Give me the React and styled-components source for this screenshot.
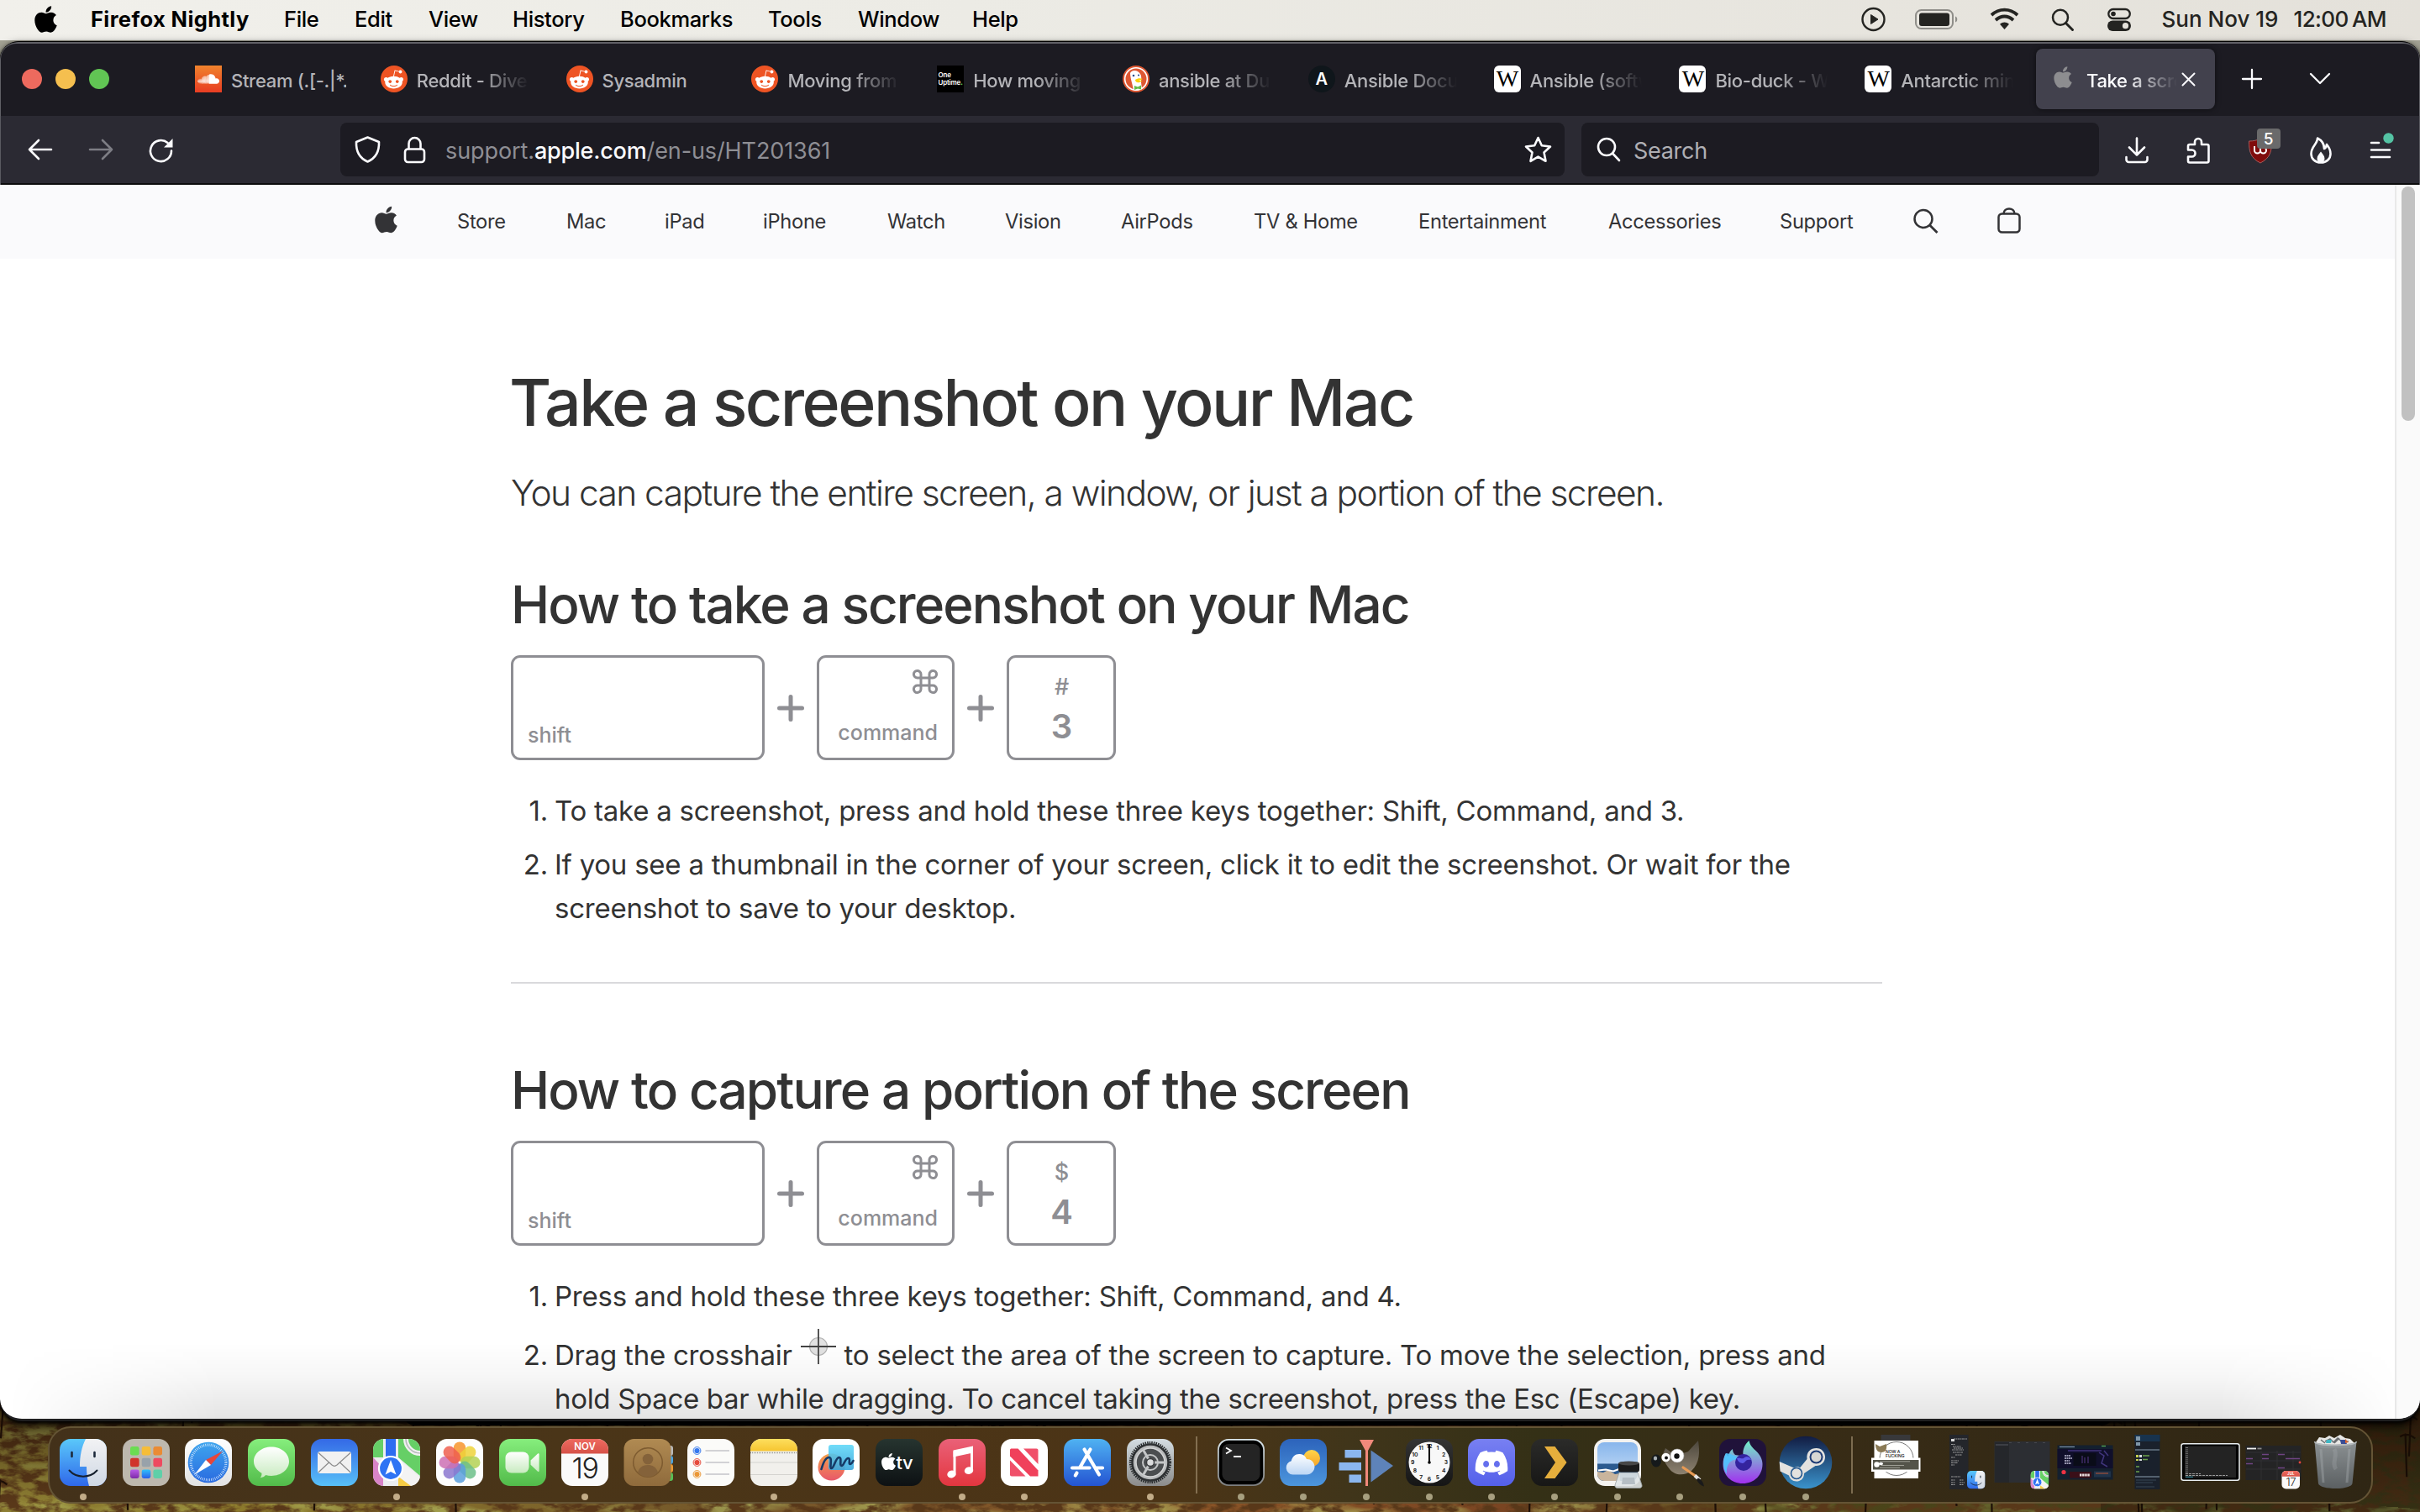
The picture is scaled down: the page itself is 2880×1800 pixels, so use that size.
import React from "react";
import styled, { createGlobalStyle, css } from "styled-components";
import { FaApple, FaRedditAlien, FaSoundcloud, FaDiscord } from "react-icons/fa";

const sans = `Inter, "Liberation Sans", sans-serif`;

const GlobalStyle = createGlobalStyle`
  * { box-sizing: border-box; }
  html, body { margin: 0; padding: 0; }
  body { width: 2880px; height: 1800px; overflow: hidden; background: #2a2412; font-family: ${sans}; }
  svg { display: block; flex: none; overflow: visible; }
`;

/* ---------- desktop ---------- */

const Desktop = styled.div`
  position: relative;
  width: 2880px;
  height: 1800px;
  display: flex;
  flex-direction: column;
  overflow: hidden;
`;

const WallpaperSvg = styled.svg`
  position: absolute;
  inset: 0;
  z-index: 0;
`;

/* ---------- menu bar ---------- */

const MenuBar = styled.header`
  position: relative;
  z-index: 1;
  height: 48px;
  flex: none;
  display: flex;
  align-items: center;
  justify-content: space-between;
  padding: 0 40px 2px 41px;
  background: linear-gradient(90deg, #f1f0eb, #ecebe5 40%, #e4e1da);
  color: #1c1c1a;
`;

const MenuGroup = styled.nav`
  display: flex;
  align-items: center;
`;

const MenuItem = styled.span`
  width: ${(p) => p.$width}px;
  font-size: 25.5px;
  line-height: 46px;
  letter-spacing: ${(p) => (p.$strong ? "0.4px" : "-0.35px")};
  font-weight: ${(p) => (p.$strong ? 700 : 500)};
  color: #000;
  white-space: nowrap;
`;

const StatusGroup = styled.div`
  display: flex;
  align-items: center;
`;

const Clock = styled.div`
  display: flex;
  gap: 18px;
  margin-left: 37px;
  font-size: 26px;
  line-height: 46px;
  font-weight: 500;
  color: #242421;
  white-space: nowrap;

  span:last-child { letter-spacing: -0.6px; word-spacing: -2px; }
`;

/* ---------- browser window ---------- */

const BrowserWindow = styled.main`
  position: relative;
  z-index: 1;
  height: 1643px;
  flex: none;
  margin-top: 1px;
  display: flex;
  flex-direction: column;
  border-top: 1px solid #000;
  border-bottom: 3px solid #1f1f20;
  border-radius: 22px 22px 26px 26px;
  background: #1c1b22;
  box-shadow: 0 2px 4px #000, 0 5px 12px rgba(0, 0, 0, 0.75);
  overflow: hidden;
`;

const TabStrip = styled.div`
  height: 88px;
  flex: none;
  display: flex;
  align-items: center;
  padding: 0 0 2px 25px;
  background: #1c1b22;
  border: solid #606066;
  border-width: 2px 1px 0;
  border-radius: 20px 20px 0 0;
`;

const TrafficLights = styled.div`
  display: flex;
  gap: 16px;
  width: 185px;
`;

const Light = styled.i`
  width: 24px;
  height: 24px;
  border-radius: 50%;
  background: ${(p) => p.$color};
`;

const Tab = styled.div`
  width: 212.8px;
  height: 72px;
  margin: 0 4px;
  display: flex;
  align-items: center;
  gap: 11px;
  padding: 0 17px;
  border-radius: 8px;
  color: #b4b4b8;
  ${(p) => p.$active && css`
    padding-right: 23px;
    background: #42414d;
    color: #fbfbfe;
    box-shadow: 0 0 6px rgba(0, 0, 0, 0.55);
  `}
`;

const TabTitle = styled.span`
  flex: 1;
  min-width: 0;
  padding-top: 4px;
  margin-right: ${(p) => (p.$active ? "-8px" : "-1px")};
  font-size: 22px;
  line-height: 32px;
  font-weight: 500;
  letter-spacing: -0.3px;
  white-space: nowrap;
  overflow: hidden;
  mask-image: ${(p) => (p.$fade ? "linear-gradient(90deg, #000 calc(100% - 62px), transparent 98%)" : "none")};
`;

const Favicon = styled.span`
  width: 32px;
  height: 32px;
  flex: none;
  display: flex;
  align-items: center;
  justify-content: center;
  overflow: hidden;
  color: #fff;
  border-radius: ${(p) => p.$radius || 0};
  background: ${(p) => p.$bg || "transparent"};
  font: ${(p) => p.$font || "inherit"};
`;

const TinyMark = styled.span`
  font: 600 8px/9px ${sans};
  color: #fff;
  letter-spacing: -0.2px;
  b { color: #58d35d; }
`;

const WikiLetter = styled.span`
  color: #000;
  letter-spacing: -1px;
`;

const TabButton = styled.span`
  width: 81px;
  display: flex;
  justify-content: center;
`;

const Toolbar = styled.div`
  height: 82px;
  flex: none;
  display: flex;
  align-items: center;
  padding: 0 32px 0 32px;
  background: #2b2a33;
  border: solid #5a5a61;
  border-width: 0 1px;
  box-shadow: inset 0 -2px 0 #0c0c0d;
`;

const NavButtons = styled.div`
  display: flex;
  gap: 42px;
  width: 372px;
`;

const Field = styled.div`
  width: ${(p) => p.$width}px;
  height: 64px;
  margin-top: -2px;
  margin-right: ${(p) => p.$after}px;
  padding: 0 15px 0 17px;
  display: flex;
  align-items: center;
  background: #1c1b22;
  border-radius: 8px;
  font-size: 27px;
  letter-spacing: -0.1px;
  color: #8e8e94;
`;

const UrlText = styled.span`
  flex: 1;
  margin-left: 24px;
  padding-top: 2px;
  b { color: #fbfbfe; font-weight: 500; letter-spacing: -0.2px; }
`;

const SearchText = styled.span`
  margin-left: 15px;
  padding-top: 2px;
  color: #afafb4;
  letter-spacing: -0.3px;
`;

const ToolButtons = styled.div`
  flex: 1;
  display: flex;
  justify-content: space-between;
  align-items: center;
  color: #fbfbfe;
`;

const BadgeHost = styled.span`
  position: relative;
`;

const Badge = styled.span`
  position: absolute;
  left: 10px;
  top: -11px;
  width: 28px;
  height: 24px;
  border-radius: 4px;
  background: #6a6a6b;
  color: #fff;
  font-size: 19px;
  font-weight: 500;
  line-height: 25px;
  text-align: center;
`;

/* ---------- web page ---------- */

const Viewport = styled.section`
  position: relative;
  flex: 1;
  min-height: 0;
  display: flex;
  background: #fff;
  overflow: hidden;
  border-radius: 0 0 23px 23px;

  &::after {
    content: "";
    position: absolute;
    left: 0;
    right: 0;
    bottom: 0;
    height: 90px;
    background: linear-gradient(180deg, transparent, rgba(0, 0, 0, 0.035) 45%, rgba(0, 0, 0, 0.105));
    mask-image: linear-gradient(90deg, transparent 10px, #000 260px, #000 2640px, transparent 2860px);
    pointer-events: none;
  }
`;

const Page = styled.div`
  flex: 1;
  min-width: 0;
`;

const ScrollTrack = styled.div`
  width: 30px;
  flex: none;
  padding: 2px 0 0 6px;
  background: #fafafa;
  border-left: 2px solid #e9e9e9;
`;

const ScrollThumb = styled.div`
  width: 16px;
  height: 279px;
  border-radius: 8px;
  background: #c1c1c1;
`;

const SiteNav = styled.nav`
  height: 88px;
  display: flex;
  align-items: center;
  padding: 0 0 1px 446px;
  background: #fafafc;
  color: #333336;
`;

const SiteLink = styled.span`
  width: ${(p) => p.$width}px;
  flex: none;
  font-size: 23.7px;
  letter-spacing: -0.3px;
  white-space: nowrap;
`;

const Article = styled.article`
  width: 1632px;
  margin-left: 608px;
  padding-top: 127px;
  color: #333;
`;

const Title = styled.h1`
  margin: 0 0 0 -2px;
  font-size: 77px;
  line-height: 88px;
  font-weight: 500;
  letter-spacing: -2.54px;
  white-space: nowrap;
`;

const Intro = styled.p`
  margin: 34px 0 67px;
  font-size: 42.5px;
  line-height: 60px;
  font-weight: 300;
  letter-spacing: -1.58px;
  white-space: nowrap;
`;

const Heading = styled.h2`
  margin: 0 0 24px;
  font-size: 62px;
  line-height: 72px;
  font-weight: 500;
  letter-spacing: -1.87px;
  white-space: nowrap;
`;

const KeyRow = styled.div`
  height: 125px;
  display: flex;
  align-items: stretch;
  color: #8e8e93;
`;

const Key = styled.div`
  width: ${(p) => p.$width}px;
  display: flex;
  flex-direction: column;
  align-items: ${(p) => p.$align};
  justify-content: ${(p) => p.$justify || "space-between"};
  padding: ${(p) => p.$pad};
  border: 3px solid #8e8e93;
  border-radius: 11px;
`;

const KeyLabel = styled.span`
  font-size: ${(p) => p.$size || 25}px;
  line-height: ${(p) => p.$line || 30}px;
  font-weight: ${(p) => p.$weight || 500};
`;

const Plus = styled.svg`
  align-self: center;
  margin: 0 15px;
`;

const Steps = styled.ol`
  list-style: none;
  margin: 34px 0 0;
  padding: 0;
  display: flex;
  flex-direction: column;
  gap: ${(p) => p.$gap}px;
`;

const Step = styled.li`
  display: flex;
  font-size: 33px;
  line-height: 52px;
  letter-spacing: -0.24px;
  white-space: nowrap;
`;

const StepNumber = styled.span`
  width: 52px;
  padding-right: 8px;
  text-align: right;
  flex: none;
`;

const StepText = styled.span`
  display: block;
`;

const Tight = styled.span`
  letter-spacing: -0.32px;
`;

const Crosshair = styled.svg`
  && { display: inline-block; }
  vertical-align: 1px;
  margin: -10px 10px 0 10px;
`;

const Rule = styled.hr`
  height: 2px;
  margin: 62px 0 91px;
  border: 0;
  background: #d9d9dc;
`;

/* ---------- dock ---------- */

const Dock = styled.footer`
  position: relative;
  z-index: 2;
  width: 2767px;
  height: 92px;
  flex: none;
  margin: 6px 0 0 57px;
  padding-left: 2.6px;
  display: flex;
  align-items: flex-start;
  border: 2px solid #645435;
  border-radius: 27px;
  background: linear-gradient(90deg, #43311a, #4a3518 22%, #4c3416 48%, #40351a 56%, #343016 64%, #382c16 75%, #2f2614);
`;

const DockSlot = styled.div`
  width: 74.7px;
  flex: none;
  padding-top: 13px;
  display: flex;
  flex-direction: column;
  align-items: center;
`;

const MiniSlot = styled.div`
  width: 74.7px;
  flex: none;
  padding-top: 5px;
`;

const RunningDot = styled.i`
  width: 8px;
  height: 8px;
  margin-top: 9px;
  border-radius: 50%;
  background: ${(p) => (p.$cool ? "#a79f7f" : "#c2ac88")};
`;

const Divider = styled.i`
  width: 2px;
  height: 68px;
  flex: none;
  margin: 10px 14.3px 0 17px;
  background: rgba(170, 152, 120, 0.6);
`;

/* ---------- drawings ---------- */

const gradients = [
  ["finderBlue", "#5ac8fa", "#2f68ea"], ["finderLight", "#f2f2f4", "#cfd8e4"], ["white", "#ffffff", "#e2e2e2"],
  ["safari", "#3fa5ee", "#2a6be0"], ["green", "#86ee7d", "#52bb4a"], ["mail", "#3469e6", "#58c0f8"],
  ["bubble", "#ffffff", "#c8ebc0"], ["calRed", "#ee6a60", "#d65248"], ["contacts", "#b08a52", "#8f6b3c"],
  ["notes", "#fddf5e", "#f6c531"], ["tv", "#26342f", "#0d1113"], ["music", "#ea6178", "#e3363f"],
  ["appstore", "#4fb2f2", "#2454d2"], ["gear", "#d4dde2", "#8b8b8b"], ["weather", "#2c63bb", "#4c96dd"],
  ["cloud", "#ffffff", "#bcd6f4"], ["sun", "#ffd54a", "#f6a327"], ["clock", "#343434", "#151515"],
  ["discord", "#7880f2", "#5460ea"], ["plex", "#2b2b29", "#171716"], ["preview", "#88b6ec", "#cbe0f6"],
  ["flame", "#6ff3c5", "#a22ff0"], ["steam", "#121c42", "#3a93cc"], ["trash", "#8f9598", "#5d6265"],
  ["wolf", "#4c463c", "#8d8270"], ["freeSky", "#62d8f8", "#39a6dc"], ["freeWarm", "#f5a04a", "#e8586a"],
  ["terminal", "#dde9ee", "#7d7f80"], ["purple", "#b95be8", "#7d2ba8"], ["bluePad", "#2fc3fb", "#2a5ee8"],
];

const DefsSvg = styled.svg`
  position: absolute;
`;

const Defs = () => (
  <DefsSvg width="0" height="0">
    <defs>
      {gradients.map(([id, a, b]) => (
        <linearGradient key={id} id={id} x1="0" y1="0" x2="0" y2="1">
          <stop offset="0" stopColor={a} />
          <stop offset="1" stopColor={b} />
        </linearGradient>
      ))}
      <clipPath id="tile"><rect width="56" height="56" rx="13" /></clipPath>
    </defs>
  </DefsSvg>
);

const Tile = ({ fill }) => <rect width="56" height="56" rx="13" fill={fill} />;

const FinderArt = () => (
  <g clipPath="url(#tile)">
    <rect width="56" height="56" fill="url(#finderBlue)" />
    <path d="M31 0C26 10 24 20 24 33h8c0 9 1 16 3 23h21V0Z" fill="url(#finderLight)" />
    <path d="M14.5 16v5M41.5 16v5" stroke="#1d2a3c" strokeWidth="2.6" strokeLinecap="round" />
    <path d="M11.5 37.5C20 47 36 47 44.5 37.5" fill="none" stroke="#16202e" strokeWidth="2" strokeLinecap="round" />
  </g>
);

const LaunchpadArt = () => {
  const c = ["#6bdc52", "#f6bd38", "#ea8b34", "#d0342b", "#98a2aa", "#ee4a60", "url(#purple)", "url(#bluePad)", "#5fcfa8"];
  return (
    <g>
      <Tile fill="#bdb8ae" />
      {c.map((f, i) => <rect key={i} x={9 + (i % 3) * 13.7} y={9 + Math.floor(i / 3) * 13.7} width="10.6" height="10.6" rx="2.4" fill={f} />)}
    </g>
  );
};

const SafariArt = () => (
  <g>
    <Tile fill="url(#white)" />
    <circle cx="28" cy="28" r="24.3" fill="url(#safari)" />
    <circle cx="28" cy="28" r="20.8" fill="none" stroke="#e6f3ff" strokeWidth="3.2" strokeDasharray="0.7 1.48" />
    <path d="M45 14.5 31 31l-6-6Z" fill="#e8453a" />
    <path d="M11.5 42.5 25 25l6 6Z" fill="#fff" />
  </g>
);

const MessagesArt = () => (
  <g>
    <Tile fill="url(#green)" />
    <path d="M28 9.5c11.6 0 21 7.6 21 17.2s-9.4 17.2-21 17.2c-2.4 0-4.7-.3-6.8-.9-1.5 1.7-3.8 2.9-6.4 3.3 1.2-1.5 1.9-3.6 1.6-5.6C10.8 37.6 7 32.5 7 26.7 7 17.1 16.4 9.5 28 9.5Z" fill="url(#bubble)" />
  </g>
);

const MailArt = () => (
  <g>
    <Tile fill="url(#mail)" />
    <rect x="8" y="15" width="40" height="26" rx="3" fill="#f1f1f1" />
    <path d="M9 16.5 25 31c2 1.7 4 1.7 6 0l16-14.5M9 39.8 21.5 28M47 39.8 34.5 28" fill="none" stroke="#8c8c8c" strokeWidth="1.2" />
  </g>
);

const MapsArt = () => (
  <g clipPath="url(#tile)">
    <rect width="56" height="56" fill="#eceded" />
    <path d="M0 0h12v22H0ZM30 0h26v44L30 22Z" fill="#66cf66" />
    <path d="M0 22 13 36v20H0Z" fill="#d884c8" />
    <path d="M30 24 56 46v10H30Z" fill="#f3f3f3" />
    <path d="M29 44 45 56H29Z" fill="#f7cd45" />
    <circle cx="56" cy="0" r="17" fill="none" stroke="#f0f0f0" strokeWidth="6" />
    <circle cx="56" cy="0" r="17" fill="none" stroke="#b5b8ba" strokeWidth="1.5" />
    <path d="M12 0h18v56H12Z" fill="#eceef0" />
    <path d="M15 0h12v24H15Z" fill="#2d6cf0" />
    <circle cx="21" cy="35" r="14" fill="#2f74f4" stroke="#fff" strokeWidth="2.2" />
    <path d="M21 25l6.5 17.5L21 39l-6.5 3.5Z" fill="#fff" />
  </g>
);

const PhotosArt = () => {
  const c = ["#f7942b", "#efd23a", "#b4d154", "#6cc08a", "#5b9fdd", "#8b77cf", "#cc70b4", "#ee5f4f"];
  return (
    <g>
      <Tile fill="#fdfdfd" />
      {c.map((f, i) => (
        <rect key={f} x="20.8" y="3.5" width="14.4" height="23.5" rx="7.2" fill={f} fillOpacity="0.85" transform={`rotate(${i * 45} 28 28)`} />
      ))}
      <circle cx="28" cy="28" r="1.5" fill="#fff" />
    </g>
  );
};

const FaceTimeArt = () => (
  <g>
    <Tile fill="url(#green)" />
    <rect x="7.5" y="15.5" width="28" height="25" rx="7" fill="url(#bubble)" />
    <path d="M37.5 25.5 46 17.5c.8-.7 1.6-.3 1.6.6v20c0 .9-.8 1.3-1.6.6l-8.5-8Z" fill="url(#bubble)" />
  </g>
);

const CalendarArt = ({ month, day }) => (
  <g>
    <Tile fill="#fafafa" />
    <path d="M0 17.5V13A13 13 0 0 1 13 0h30a13 13 0 0 1 13 13v4.5Z" fill="url(#calRed)" />
    <text x="28" y="13" fontSize="11.5" fontWeight="600" fill="#fff" textAnchor="middle" fontFamily={sans}>{month}</text>
    <text x="28" y="47" fontSize="34" letterSpacing="-1.5" fontWeight="300" fill="#222" textAnchor="middle" fontFamily={sans}>{day}</text>
  </g>
);

const ContactsArt = () => (
  <g>
    <rect x="44" y="8" width="14" height="12" rx="3" fill="#b9b9b9" />
    <rect x="44" y="20" width="14" height="10" rx="3" fill="#4ba6e4" />
    <rect x="44" y="30" width="14" height="10" rx="3" fill="#ee9a31" />
    <rect x="44" y="40" width="14" height="10" rx="3" fill="#56c156" />
    <rect x="-0.5" width="56" height="56" rx="12" fill="url(#contacts)" />
    <circle cx="28" cy="28" r="17.3" fill="none" stroke="#7d5b30" strokeWidth="1.5" />
    <circle cx="28" cy="24" r="6.3" fill="#84623a" />
    <path d="M16 40c2-7 7-9 12-9s10 2 12 9c-7 7-17 7-24 0Z" fill="#84623a" />
  </g>
);

const RemindersArt = () => (
  <g>
    <Tile fill="#fbfbf9" />
    {["#3578ee", "#e64a3c", "#ea9736"].map((f, i) => (
      <g key={f}>
        <circle cx="11.5" cy={14 + i * 14} r="4.4" fill="none" stroke={f} strokeWidth="1" />
        <circle cx="11.5" cy={14 + i * 14} r="3.1" fill={f} />
        <path d={`M21.5 ${14 + i * 14}h28.5`} stroke="#c4c4c8" strokeWidth="1.5" />
      </g>
    ))}
  </g>
);

const NotesArt = () => (
  <g clipPath="url(#tile)">
    <rect width="56" height="56" fill="#f1f0ec" />
    <rect width="56" height="14.5" fill="url(#notes)" />
    <path d="M0 16.500h56" stroke="#9a9a94" strokeWidth="1.4" strokeDasharray="1 1" />
    <path d="M0 28h56M0 42.5h56" stroke="#d4d3cf" strokeWidth="1.2" />
  </g>
);

const FreeformArt = () => (
  <g>
    <Tile fill="#fff" />
    <circle cx="22.5" cy="33.5" r="16" fill="url(#freeWarm)" />
    <rect x="19" y="7" width="30" height="30" rx="3" fill="url(#freeSky)" fillOpacity="0.9" />
    <path d="M10.500 36c2-7 5-14 9-14 5 0 0 13 3 13 3 0 5-13 9-13 4 0 0 10 3 10 3 0 4-9 8-9 3 0 0 7 2 7 2 0 3-2 4-4" fill="none" stroke="#163a67" strokeWidth="2.6" strokeLinecap="round" />
  </g>
);

const TvArt = () => (
  <g>
    <Tile fill="url(#tv)" />
    <FaApple x={4} y={15.5} size={23} color="#fff" />
    <text x="24.500" y="36" fontSize="22" fontWeight="500" fill="#fff" fontFamily={sans} letterSpacing="-0.5">tv</text>
  </g>
);

const MusicArt = () => (
  <g>
    <Tile fill="url(#music)" />
    <path d="M19 14.5v26M39.5 9.5v27" stroke="#fff" strokeWidth="3" />
    <path d="M17.5 13.5 41 8.5v8L17.5 21.5Z" fill="#fff" />
    <ellipse cx="15.5" cy="42" rx="5.3" ry="4.3" fill="#fff" transform="rotate(-15 15.5 42)" />
    <ellipse cx="36" cy="37.7" rx="5.3" ry="4.3" fill="#fff" transform="rotate(-15 36 37.7)" />
  </g>
);

const NewsArt = () => (
  <g>
    <Tile fill="#fff" />
    <path d="M11 13v7.5L35 44.5h9.5v-7L20.5 11.500H13c-1.2 0-2 .6-2 1.5Z" fill="#f0405b" />
    <path d="M11 25.5v17c0 1.2.8 2 2 2h16.5ZM27 11.500h15.5c1.2 0 2 .8 2 2V30Z" fill="#f0506a" />
  </g>
);

const AppStoreArt = () => (
  <g>
    <Tile fill="url(#appstore)" />
    <path d="M31.5 12.5 19.5 33.500M15.5 40.5l-1.7 3M24.5 12.5l17.5 30M10 34.5h20.5M38.5 34.500H46" stroke="#fff" strokeWidth="4.2" strokeLinecap="round" fill="none" />
  </g>
);

const SettingsArt = () => (
  <g>
    <Tile fill="url(#gear)" />
    <circle cx="28" cy="28" r="23.6" fill="none" stroke="#26292b" strokeWidth="3" strokeDasharray="1.5 1.1" />
    <circle cx="28" cy="28" r="21.5" fill="#b8babb" stroke="#2d3032" strokeWidth="2.5" />
    <circle cx="28" cy="28" r="17" fill="#4b4e50" stroke="#d4d5d6" strokeWidth="1.5" />
    <path d="M28 28h17M28 28l-8.5-15M28 28l-8.500 15" stroke="#c3c5c6" strokeWidth="3" />
    <circle cx="28" cy="28" r="9" fill="none" stroke="#c3c5c6" strokeWidth="2" />
    <circle cx="28" cy="28" r="4.5" fill="#dadbdc" stroke="#3b3d3f" strokeWidth="1.5" />
  </g>
);

const TerminalArt = () => (
  <g>
    <Tile fill="url(#terminal)" />
    <rect x="1.8" y="1.8" width="52.4" height="52.4" rx="11.5" fill="#000" />
    <rect x="5.5" y="6" width="45" height="44" rx="7.5" fill="#242424" />
    <path d="M10 10.5 16 14l-6 3.500M19 21h9" fill="none" stroke="#fff" strokeWidth="1.8" />
  </g>
);

const WeatherArt = () => (
  <g>
    <Tile fill="url(#weather)" />
    <circle cx="38" cy="23" r="10" fill="url(#sun)" />
    <path d="M15.5 42.5a8.3 8.3 0 0 1-1.7-16.3C14.8 21 19 17.5 24 18c4 .3 6.7 2.5 8 6 5 0 9 3.3 9.5 8.5.2 5.5-4 10-9.5 10Z" fill="url(#cloud)" />
  </g>
);

const AlignArt = () => (
  <g>
    <rect x="2.5" y="13" width="19.5" height="9.5" fill="#8bb6ee" />
    <rect x="-4.5" y="28" width="26.5" height="9.5" fill="#8bb6ee" />
    <rect x="7.5" y="42.5" width="14.5" height="9.5" fill="#8bb6ee" />
    <path d="M20 1h17l-7 13v42h-3V14Z" fill="#f1897b" />
    <path d="M33.5 13.5 60 32 33.5 51.500Z" fill="#5e83b9" />
  </g>
);

const ClockArt = () => (
  <g>
    <Tile fill="url(#clock)" />
    <circle cx="28" cy="28" r="24.5" fill="#f8f8f8" />
    {Array.from({ length: 12 }, (_, i) => {
      const a = ((i + 1) * Math.PI) / 6;
      return <text key={i} x={28 + 19.8 * Math.sin(a)} y={30.4 - 19.8 * Math.cos(a)} fontSize="6.8" fontWeight="600" fill="#111" textAnchor="middle" fontFamily={sans}>{i + 1}</text>;
    })}
    <path d="M28 28V7" stroke="#000" strokeWidth="2" strokeLinecap="round" />
    <circle cx="28" cy="28" r="1.8" fill="#000" />
  </g>
);

const DiscordArt = () => (
  <g>
    <Tile fill="url(#discord)" />
    <FaDiscord x={7} y={7.5} size={42} color="#fff" />
  </g>
);

const PlexArt = () => (
  <g>
    <Tile fill="url(#plex)" />
    <path d="M16 9h12.5L42.5 28 28.5 47H16l13-19Z" fill="#e5ae3c" />
  </g>
);

const PreviewArt = () => (
  <g>
    <Tile fill="#f4f3f0" />
    <rect x="4" y="4" width="48" height="46" rx="8" fill="url(#preview)" />
    <path d="M4 29.5h48V42a8 8 0 0 1-8 8H12a8 8 0 0 1-8-8Z" fill="#2b5a8f" />
    <path d="M4 39l7 1 6-3 8 5 6-1v9H12a8 8 0 0 1-8-8Z" fill="#c9b59d" />
    <path d="M5 37.5l9-1 9 2 8-3" stroke="#fff" strokeWidth="2" fill="none" />
    <path d="M30 40h22l5 15c.5 2-1 3.5-3 3.500H28c-2 0-3.5-1.5-3-3.500Z" fill="#dfe4e6" fillOpacity="0.9" stroke="#9aa2a5" strokeWidth="0.8" />
    <path d="M34 46h14l1 8H33Z" fill="#b5bec4" />
    <rect x="29" y="27.5" width="25" height="12" rx="3" fill="#1b1b1b" />
    <ellipse cx="41.5" cy="29" rx="12" ry="2.5" fill="#474747" />
  </g>
);

const GimpArt = () => (
  <g>
    <path d="M8 18 11 11l7 5c6 2 14 2 20-1l12-13c2 14 2 26-8 36-8 6-20 6-26-2-4-5-8-11-8-18Z" fill="url(#wolf)" />
    <ellipse cx="0" cy="26" rx="6" ry="7.5" fill="#15191b" />
    <ellipse cx="-1" cy="23" rx="2.2" ry="2.6" fill="#a8afb2" />
    <circle cx="11.5" cy="22" r="5.2" fill="#fff" />
    <circle cx="25" cy="20" r="8" fill="#fff" stroke="#aaa" strokeWidth="0.6" />
    <circle cx="12" cy="22.5" r="2" fill="#111" />
    <circle cx="24.5" cy="20.5" r="3.2" fill="#111" />
    <path d="M32 34 48 45" stroke="#e79a54" strokeWidth="3.2" strokeLinecap="round" />
    <path d="M46 43.5 52 49" stroke="#e4e4e4" strokeWidth="4" />
    <path d="M50 46.5c4 2 6 5 7 10-4-1-7-4-9-8Z" fill="#1a1a1a" />
  </g>
);

const NightlyArt = () => (
  <g>
    <Tile fill="#20123a" />
    <path d="M28 53C14 53 4.5 43 4.5 30c0-5 1-9 3.5-13 .5 2 1.5 3 3 4 .5-4 2-7 5-9 0 3 1 5 3 7 5 1 8 1 10 2C27 14 30 7 35.5 2c1 6 5 9 9 13 4 4 7 9 7 15 0 13-9.5 23-23.5 23Z" fill="url(#flame)" />
    <path d="M8 17c-4 9-4 18 1 25-1-10 3-15 8-17l6-1c-1-4-7-4-9-6Z" fill="#4fc4ff" fillOpacity="0.9" />
    <circle cx="29" cy="28" r="10" fill="#34239e" />
    <path d="M21 23c3-1 6 1 8 0 3-3 8-2 9 2-4-1-6 0-8 3-2 2-7 1-9-5Z" fill="#5d5be8" />
  </g>
);

const SteamArt = () => (
  <g>
    <circle cx="28" cy="28" r="31.3" fill="url(#steam)" />
    <path d="M-3.300 27 14 34.5c3-1.800 6-1.500 7 0L29.5 24C28.5 15 34 11 40.5 11 47 11 51 16 51 21.5 51 28 46 32.5 39.5 32L26 41c0 7-5 9.5-9 9.5-5 0-8-3-9-7L-2.5 38.500Z" fill="#e3e2df" />
    <circle cx="40.5" cy="21.5" r="8" fill="#1d3b75" />
    <circle cx="40.5" cy="21.5" r="6" fill="#d8d7d3" />
    <circle cx="17" cy="41" r="6.5" fill="none" stroke="#23578f" strokeWidth="1.6" />
  </g>
);

const CollageMini = () => (
  <g>
    <rect x="19.5" y="3" width="35" height="10" fill="#38383a" />
    <rect x="11.5" y="10" width="52.5" height="45" fill="#fff" />
    <circle cx="38" cy="31.5" r="20" fill="none" stroke="#555" strokeWidth="0.8" />
    <path d="M13 14l5 3 8-3c1 6-1 10-6 10s-7-4-7-10Z" fill="#8a7a56" />
    <text x="25" y="25.5" fontSize="5" fontWeight="500" fill="#111" fontFamily={sans}>NOW A</text>
    <text x="25" y="30.3" fontSize="5" fontWeight="500" fill="#111" fontFamily={sans}>FUCKING</text>
    <rect x="8" y="30.5" width="58.5" height="16.5" fill="#fff" />
    <rect x="10" y="33" width="54.5" height="11.5" fill="#54544a" />
    <circle cx="14.5" cy="38.5" r="3.2" fill="#fff" />
    <rect x="17" y="36" width="5" height="3" rx="1.5" fill="#fff" />
    <path d="M18 34.800h36M19 39.500h28M18 42.300h24" stroke="#b5b5ac" strokeWidth="0.8" />
  </g>
);

const LogMini = () => (
  <g>
    <rect x="26" y="3" width="22.5" height="65" fill="#24262b" />
    <path d="M28 8h4v3h-4z" fill="#ddd" />
    <path d="M31 8h16M28 14.500h5M30 17h10M31 19h11M29 21h14M30 24h12M33 27h8M28 30h5M28 34h9M28 36.500h8M28 39h4M28 53h11M28 57h5M38 57h5M28 60h5M38 60h6M28 62.500h5M38 62.500h5" stroke="#a8a8a8" strokeWidth="0.9" strokeDasharray="2 0.5" />
    <svg x="47" y="46" width="21.5" height="21.5" viewBox="0 0 56 56"><FinderArt /></svg>
  </g>
);

const MapMini = () => (
  <g>
    <rect x="4.5" y="11" width="66" height="49" fill="#2c2e33" />
    <path d="M5 12h17v48H5Z" fill="#25272b" />
    <path d="M6 15h15" stroke="#46484d" strokeWidth="1.5" />
    <path d="M22 12.500h47" stroke="#45474c" strokeWidth="1" strokeDasharray="3 7" />
    <svg x="47.5" y="46" width="21.5" height="21.5" viewBox="0 0 56 56"><MapsArt /></svg>
  </g>
);

const StoreMini = () => (
  <g>
    <rect x="4.5" y="15.5" width="66" height="41" fill="#14202f" />
    <rect x="4.5" y="20" width="66" height="23" fill="#100f2b" />
    <path d="M7 17.500h18" stroke="#7c93a8" strokeWidth="1.2" />
    <path d="M57 16.500h5" stroke="#58b05a" strokeWidth="1.2" />
    <path d="M17 22h40M54 24l6 4-3 9 7 4M60 22l5 6" stroke="#40357c" strokeWidth="1.5" fill="none" />
    <rect x="23.5" y="25" width="27" height="15" fill="#0a0c18" />
    <path d="M34 28v9M37 30v7M41 29v8" stroke="#3d2a63" strokeWidth="1.5" />
    <path d="M13 28h7M13 31h9M13 34h6M13 37h8" stroke="#c4c4dc" strokeWidth="1.7" strokeDasharray="2 0.5" />
    <circle cx="12" cy="47.5" r="2.6" fill="#ee3344" />
    <rect x="19" y="47" width="26" height="7.5" fill="#3a0f18" />
    <path d="M31 51h12" stroke="#e9dede" strokeWidth="3" strokeDasharray="2.5 0.6" />
    <rect x="48" y="46.5" width="20" height="7" fill="#203349" />
    <path d="M50 49h15" stroke="#8a4a3c" strokeWidth="1.5" />
  </g>
);

const FriendsMini = () => (
  <g>
    <rect x="22.5" y="3" width="30" height="65" fill="#1a212c" />
    <rect x="22.5" y="3" width="30" height="8" fill="#18334d" />
    <path d="M23 21h29M23 53h29" stroke="#53606e" strokeWidth="2" />
    <path d="M24 5h5v5h-5zM24 12h5v4h-5z" fill="#7e96a8" />
    <path d="M24 27h3v3h-3zM24 32h3v2h-3z" fill="#c7d04f" />
    <path d="M28 27h3v3h-3zM28 32h3v2h-3z" fill="#d9dde1" />
    <path d="M32 28h8M32 32.500h6M24 41h4M24 47h4" stroke="#6da14b" strokeWidth="1.5" />
    <path d="M24 57h24M24 60h20M24 65h22" stroke="#394756" strokeWidth="1" />
  </g>
);

const TerminalMini = () => (
  <g>
    <rect x="3" y="13.8" width="69" height="43.5" rx="2.5" fill="#000" stroke="#e9eef0" strokeWidth="1.5" />
    <rect x="7" y="16.5" width="61" height="37.5" fill="#232323" />
    <path d="M9.500 18v31" stroke="#777" strokeWidth="3" strokeDasharray="0.9 1.5" />
    <path d="M8 49.500h18M8 51.500h50" stroke="#aaa" strokeWidth="0.9" strokeDasharray="3 1" />
    <path d="M8 53.300h9" stroke="#3fa7c0" strokeWidth="0.9" />
  </g>
);

const CalendarMini = () => (
  <g>
    <rect x="4.5" y="16" width="66" height="41" fill="#242425" />
    <path d="M6 19.500h11" stroke="#eee" strokeWidth="1.8" />
    <path d="M18.500 19.500h5" stroke="#888" strokeWidth="1.8" />
    <path d="M5 24h65M5 34h65M5 44h65M23 22v35M42 22v35M61 22v35" stroke="#343437" strokeWidth="0.8" />
    <path d="M24 26.500h8M43 26.500h8M5 31.500h8M24 31.500h8M52 31.500h17M5 37.500h8M43 42.500h8" stroke="#6e4482" strokeWidth="1.5" />
    <circle cx="69" cy="36" r="1.4" fill="#e5453b" />
    <svg x="47.5" y="46" width="21.5" height="21.5" viewBox="0 0 56 56"><CalendarArt month="JUL" day="17" /></svg>
  </g>
);

const TrashMini = () => (
  <g>
    <path d="M14 12l4-6 7 1 5-3 6 3 7-4 6 4 6 1 5 5-6 6H20Z" fill="#e8e8e6" />
    <path d="M25 11l6-3 4 4 5-5 6 5 7-1M20 9l5 4M36 13l6-6" stroke="#6b6f72" strokeWidth="1.5" fill="none" />
    <path d="M27 9h6l-1 4h-6Z" fill="#3fb7c4" />
    <path d="M43 9h6l2 5h-7Z" fill="#3a4d96" />
    <path d="M49 8l4 4-4 1Z" fill="#d7632e" />
    <path d="M12.500 11c1 5 49 5 50 0L57.5 61c-1 8-39 8-40.500 0Z" fill="url(#trash)" fillOpacity="0.96" />
    <path d="M12.500 11c1 6 49 6 50 0" fill="none" stroke="#b4b9bb" strokeWidth="1.5" />
    <path d="M20 20l3 40M54 20l-3 40" stroke="#a7adb0" strokeWidth="3" strokeOpacity="0.4" />
    <path d="M36 20c5 8-4 16 2 24" stroke="#b0b5b8" strokeWidth="5" strokeOpacity="0.25" fill="none" />
  </g>
);

const appDock = [
  [FinderArt, 1], [LaunchpadArt], [SafariArt], [MessagesArt], [MailArt], [MapsArt, 1], [PhotosArt], [FaceTimeArt],
  [() => <CalendarArt month="NOV" day="19" />, 1], [ContactsArt], [RemindersArt], [NotesArt, 1], [FreeformArt], [TvArt],
  [MusicArt, 1], [NewsArt, 1], [AppStoreArt], [SettingsArt, 1],
];
const runningDock = [TerminalArt, WeatherArt, AlignArt, ClockArt, DiscordArt, PlexArt, PreviewArt, GimpArt, NightlyArt, SteamArt];
const minis = [CollageMini, LogMini, MapMini, StoreMini, FriendsMini, TerminalMini, CalendarMini, TrashMini];

/* Vineyard rows: a warm base, leaf texture and thin trellis posts. */
const Wallpaper = () => {
  let seed = 7;
  const rnd = () => (seed = (seed * 16807) % 2147483647) / 2147483647;
  const posts = Array.from({ length: 90 }, () => [rnd() * 2880, 1660 + rnd() * 110, 18 + rnd() * 50, rnd() * 6 - 3]);
  return (
    <WallpaperSvg width="2880" height="1800" viewBox="0 0 2880 1800">
      <defs>
        <linearGradient id="soil" x1="0" x2="1" y1="0" y2="0">
          <stop offset="0" stopColor="#8d7e33" />
          <stop offset="0.1" stopColor="#8c7a2c" />
          <stop offset="0.3" stopColor="#74572a" />
          <stop offset="0.5" stopColor="#8a5427" />
          <stop offset="0.62" stopColor="#7a4522" />
          <stop offset="0.75" stopColor="#4b4519" />
          <stop offset="1" stopColor="#453f1b" />
        </linearGradient>
        <linearGradient id="dusk" x1="0" x2="0" y1="0" y2="1">
          <stop offset="0" stopColor="#1c0d04" stopOpacity="0.75" />
          <stop offset="1" stopColor="#1c0d04" stopOpacity="0" />
        </linearGradient>
        <filter id="leaves" x="0" y="0" width="1" height="1">
          <feTurbulence type="fractalNoise" baseFrequency="0.045 0.1" numOctaves="4" seed="4" />
          <feColorMatrix values="0 0 0 0 0.1  0 0 0 0 0.04  0 0 0 0 0.01  4.2 0 0 0 -1.6" />
        </filter>
        <filter id="grass" x="0" y="0" width="1" height="1">
          <feTurbulence type="fractalNoise" baseFrequency="0.012 0.05" numOctaves="3" seed="11" />
          <feColorMatrix values="0 0 0 0 0.45  0 0 0 0 0.5  0 0 0 0 0.12  0 4 0 0 -1.9" />
        </filter>
      </defs>
      <rect y="0" width="2880" height="100" fill="#a3a294" />
      <rect y="1640" width="2880" height="160" fill="url(#soil)" />
      <g transform="rotate(4 60 1750)"><rect x="-60" y="1600" width="3100" height="260" filter="url(#grass)" opacity="0.6" /></g>
      <rect y="1640" width="2880" height="160" filter="url(#leaves)" />
      {posts.map(([x, y, h, d], i) => (
        <path key={i} d={`M${x} ${y}l${d} ${h}m-8-${h - 4}q8-6 18 2`} stroke="#1d0f07" strokeWidth="2.2" fill="none" />
      ))}
      <rect y="1640" width="2880" height="150" fill="url(#dusk)" />
      <rect x="2500" y="1640" width="380" height="160" fill="#0d0a04" opacity="0.3" />
      <rect x="480" y="1660" width="2035" height="37" rx="14" fill="#060606" />
    </WallpaperSvg>
  );
};

/* ---------- content ---------- */

const menus = [["Firefox Nightly", 230, true], ["File", 84], ["Edit", 88], ["View", 100], ["History", 128], ["Bookmarks", 176], ["Tools", 107], ["Window", 136], ["Help", 60]];

const reddit = <Favicon $bg="#ee5424" $radius="50%"><FaRedditAlien size={25} /></Favicon>;
const wiki = <Favicon $bg="#fff" $radius="6px" $font={`400 28px/32px "Liberation Serif", serif`}><WikiLetter>W</WikiLetter></Favicon>;

const DuckFavicon = () => (
  <svg width="32" height="32" viewBox="0 0 32 32">
    <circle cx="16" cy="16" r="16" fill="#de5833" />
    <circle cx="16" cy="16" r="13.3" fill="none" stroke="#fff" strokeWidth="1.6" />
    <path d="M9 9c2-4 9-4 12 1 2 3 1 7 1 10l1 8c-4 2-8 2-10 1-1-6-4-14-4-20Z" fill="#fff" />
    <circle cx="13" cy="12" r="1.3" fill="#2d4f8e" />
    <circle cx="19" cy="11.5" r="1.1" fill="#2d4f8e" />
    <path d="M15 17c3-2 6-2 9-1l-5 2h5l-4 2c-3 1-5-1-5-3Z" fill="#fdd20a" />
    <path d="M14 24l4 1.5 4-2v5l-4-1-4 1.500Z" fill="#65bc46" />
  </svg>
);

const tabs = [
  [<Favicon key="s" $bg="linear-gradient(#f0832d, #e83d23)"><FaSoundcloud size={26} /></Favicon>, "Stream (.[-.|*.", false],
  [reddit, "Reddit - Dive", true],
  [reddit, "Sysadmin", false],
  [reddit, "Moving from", true],
  [<Favicon key="o" $bg="#000"><TinyMark>One<br />Uptime<b>.</b></TinyMark></Favicon>, "How moving f", true],
  [<DuckFavicon key="d" />, "ansible at Du", true],
  [<Favicon key="a" $bg="#0f161b" $radius="50%" $font={`600 20px/32px ${sans}`}>A</Favicon>, "Ansible Docu", true],
  [wiki, "Ansible (softw", true],
  [wiki, "Bio-duck - W", true],
  [wiki, "Antarctic min", true],
];

const siteLinks = [["Store", 130], ["Mac", 117], ["iPad", 117], ["iPhone", 148], ["Watch", 140], ["Vision", 138], ["AirPods", 158], ["TV & Home", 196], ["Entertainment", 226], ["Accessories", 204], ["Support", 159]];

const PlusSign = () => (
  <Plus width="32" height="32" viewBox="0 0 32 32">
    <path d="M16 2.500v27M2.500 16h27" stroke="#8e8e93" strokeWidth="5" strokeLinecap="round" />
  </Plus>
);

const CommandGlyph = () => (
  <svg width="30" height="29" viewBox="0 0 30 29" fill="none" stroke="#8e8e93" strokeWidth="3">
    <path d="M10 10h10v9H10ZM10 10H6a4.300 4.300 0 1 1 4-4.500ZM20 10V5.500a4.300 4.300 0 1 1 4 4.500ZM20 19h4a4.300 4.300 0 1 1-4 4.500ZM10 19v4.500A4.300 4.300 0 1 1 6 19Z" />
  </svg>
);

const Shortcut = ({ upper, digit }) => (
  <KeyRow>
    <Key $width={302} $align="flex-start" $justify="flex-end" $pad="0 17px 12px"><KeyLabel>shift</KeyLabel></Key>
    <PlusSign />
    <Key $width={164} $align="flex-end" $pad="14px 17px 15px"><CommandGlyph /><KeyLabel>command</KeyLabel></Key>
    <PlusSign />
    <Key $width={130} $align="center" $justify="flex-start" $pad="20px 0 0 1px">
      <KeyLabel $size={27} $line={30}>{upper}</KeyLabel>
      <KeyLabel $size={40} $line={64} $weight={600}>{digit}</KeyLabel>
    </Key>
  </KeyRow>
);

const line = { fill: "none", stroke: "#fbfbfe", strokeWidth: 2.6, strokeLinecap: "round", strokeLinejoin: "round" };

export default function App() {
  return (
    <>
      <GlobalStyle />
      <Desktop>
        <Wallpaper />
        <MenuBar>
          <MenuGroup>
            <svg width="67" height="32" viewBox="0 0 67 32"><FaApple x={-4.5} y={-2} size={36} color="#000" /></svg>
            {menus.map(([label, width, strong]) => <MenuItem key={label} $width={width} $strong={strong}>{label}</MenuItem>)}
          </MenuGroup>
          <StatusGroup>
            <svg width="321" height="34" viewBox="0 0 321 34" fill="none" stroke="#242421">
              <circle cx="14.500" cy="17" r="13" strokeWidth="2.4" />
              <path d="M11.500 11.500v11l8.500-5.500Z" fill="#242421" strokeWidth="1" />
              <rect x="65" y="6" width="44" height="22" rx="6.5" strokeWidth="2" stroke="#8f8e89" />
              <rect x="69" y="9.5" width="36" height="15.5" rx="3" fill="#242421" stroke="none" />
              <path d="M112 13.500c3 .8 3 6.200 0 7Z" fill="#8f8e89" stroke="none" />
              <path d="M155 12c9-8.500 22-8.500 31 0M160 18c6.500-6 14.500-6 21 0" strokeWidth="3.8" />
              <path d="M165 22.800c3.700-3 7.300-3 11 0L170.500 29Z" fill="#242421" stroke="none" />
              <circle cx="237" cy="14.8" r="9" strokeWidth="2.5" />
              <path d="M243.500 21.500l8 8" strokeWidth="3" strokeLinecap="round" />
              <rect x="294.3" y="5" width="25.5" height="11" rx="5.5" strokeWidth="2.3" />
              <circle cx="300" cy="10.5" r="2.8" fill="#242421" stroke="none" />
              <rect x="293" y="18.5" width="28" height="12.5" rx="6.2" fill="#242421" stroke="none" />
              <circle cx="314.5" cy="24.7" r="3.6" fill="#e5e2db" stroke="none" />
            </svg>
            <Clock><span>Sun Nov 19</span><span>12:00 AM</span></Clock>
          </StatusGroup>
        </MenuBar>

        <BrowserWindow>
          <TabStrip>
            <TrafficLights><Light $color="#ed6a5e" /><Light $color="#f5bf4f" /><Light $color="#61c554" /></TrafficLights>
            {tabs.map(([icon, title, fade]) => (
              <Tab key={title}>{icon}<TabTitle $fade={fade}>{title}</TabTitle></Tab>
            ))}
            <Tab $active>
              <Favicon><svg width="32" height="32" viewBox="0 0 32 32"><FaApple x={0.5} y={-0.5} size={29} color="#8d8d90" /></svg></Favicon>
              <TabTitle $fade $active>Take a scre</TabTitle>
              <svg width="17" height="17" viewBox="0 0 17 17"><path d="M1.500 1.500l14 14M15.500 1.500l-14 14" {...line} strokeWidth="2" /></svg>
            </Tab>
            <TabButton><svg width="24" height="24" viewBox="0 0 24 24"><path d="M12 1v22M1 12h22" {...line} strokeWidth="2.3" /></svg></TabButton>
            <TabButton><svg width="24" height="14" viewBox="0 0 24 14"><path d="M1 1l11 11L23 1" {...line} strokeWidth="2.3" /></svg></TabButton>
          </TabStrip>

          <Toolbar>
            <NavButtons>
              <svg width="30" height="26" viewBox="0 0 30 26"><path d="M28 13H2M13 2L2 13l11 11" {...line} /></svg>
              <svg width="30" height="26" viewBox="0 0 30 26" opacity="0.4"><path d="M2 13h26M17 2l11 11-11 11" {...line} /></svg>
              <svg width="30" height="28" viewBox="0 0 30 28"><path d="M27 14.500A12.500 12.500 0 1 1 22.500 5" {...line} /><path d="M28.500 0v10.500H18Z" fill="#fbfbfe" /></svg>
            </NavButtons>
            <Field $width={1457} $after={20}>
              <svg width="84" height="32" viewBox="0 0 84 32">
                <path d="M15.500 1.500 29 7c.5 12-4.500 19.500-13.500 23.500C6.500 26.500 1.500 19 2 7Z" {...line} />
                <rect x="60" y="15.5" width="23" height="15.5" rx="3.5" {...line} />
                <path d="M64.500 15V9a7 7 0 0 1 14 0v6" {...line} />
              </svg>
              <UrlText>support.<b>apple.com</b>/en-us/HT201361</UrlText>
              <svg width="33" height="32" viewBox="0 0 33 32"><path d="M16.500 2l4.300 9.300 10.200 1.200-7.500 7 2 10.300-9-5.200-9 5.200 2-10.300-7.500-7 10.200-1.200Z" {...line} /></svg>
            </Field>
            <Field $width={616} $after={31}>
              <svg width="30" height="30" viewBox="0 0 30 30"><circle cx="13" cy="12" r="10" {...line} /><path d="M20 19.500l8 8.500" {...line} /></svg>
              <SearchText>Search</SearchText>
            </Field>
            <ToolButtons>
              <svg width="28" height="32" viewBox="0 0 28 32"><path d="M14 1.500v20M5 12.500l9 9 9-9M1.500 24v3a3 3 0 0 0 3 3h19a3 3 0 0 0 3-3v-3" {...line} /></svg>
              <svg width="28" height="32" viewBox="0 0 28 32"><path d="M2 14V11a2 2 0 0 1 2-2h6V6a4 4 0 0 1 8 0v3h6.500a2 2 0 0 1 2 2v17.500a2 2 0 0 1-2 2H4a2 2 0 0 1-2-2V23.500h4.500a3.500 3.500 0 0 0 0-8H2Z" {...line} /></svg>
              <BadgeHost>
                <svg width="28" height="30" viewBox="0 0 28 30">
                  <path d="M14 1c4 2 8 3 13.500 3C27.500 16 26 24 14 30 2 24 .5 16 .5 4 6 4 10 3 14 1Z" fill="#800c0c" stroke="#a45a5a" strokeWidth="1" />
                  <path d="M7 10v5a3.500 3.500 0 0 0 7 0v-5M14 15a3.500 3.500 0 0 0 7 0 4 4 0 0 0-4-4" fill="none" stroke="#fff" strokeWidth="2" />
                </svg>
                <Badge>5</Badge>
              </BadgeHost>
              <svg width="26" height="32" viewBox="0 0 26 32">
                <path d="M9 1.500c0 7-7.500 10-7.500 18.500C1.500 26 6 30.500 13 30.500S24.500 26 24.500 20c0-5-2-8-4.500-11-.5 3-1.500 4.500-3 5C17 8.500 14 4 9 1.500Z" {...line} />
                <path d="M13 17.500c-2 3-4.500 5-4.500 8.500 0 2.500 2 4.500 4.500 4.500s4.500-2 4.500-4.500c0-3.500-2.500-5.500-4.500-8.500Z" fill="#fbfbfe" />
              </svg>
              <svg width="27" height="32" viewBox="0 0 27 32">
                <path d="M2 7h9M2 15.500h22M2 24h22" {...line} />
                <circle cx="22.500" cy="1.5" r="6.2" fill="#54c3a4" />
              </svg>
            </ToolButtons>
          </Toolbar>

          <Viewport>
            <Page>
              <SiteNav>
                <svg width="98" height="32" viewBox="0 0 98 32"><FaApple x={-4.5} y={-4.5} size={36} color="#333336" /></svg>
                {siteLinks.map(([label, width]) => <SiteLink key={label} $width={width}>{label}</SiteLink>)}
                <svg width="128" height="32" viewBox="0 0 128 32" fill="none" stroke="#333336" strokeWidth="2.5">
                  <circle cx="12" cy="12.5" r="10.5" />
                  <path d="M19.500 20l9 9" strokeWidth="2.8" />
                  <rect x="101.500" y="6.5" width="25" height="22" rx="4" />
                  <path d="M107.500 6.500c0-8 13-8 13 0" />
                </svg>
              </SiteNav>
              <Article>
                <Title>Take a screenshot on your Mac</Title>
                <Intro>You can capture the entire screen, a window, or just a portion of the screen.</Intro>
                <Heading>How to take a screenshot on your Mac</Heading>
                <Shortcut upper="#" digit="3" />
                <Steps $gap={12}>
                  <Step><StepNumber>1.</StepNumber><StepText>To take a screenshot, press and hold these three keys together: Shift, Command, and 3.</StepText></Step>
                  <Step><StepNumber>2.</StepNumber><StepText>If you see a thumbnail in the corner of your screen, click it to edit the screenshot. Or wait for the<br />screenshot to save to your desktop.</StepText></Step>
                </Steps>
                <Rule />
                <Heading>How to capture a portion of the screen</Heading>
                <Shortcut upper="$" digit="4" />
                <Steps $gap={18}>
                  <Step><StepNumber>1.</StepNumber><StepText>Press and hold these three keys together: Shift, Command, and 4.</StepText></Step>
                  <Step>
                    <StepNumber>2.</StepNumber>
                    <StepText>
                      Drag the crosshair
                      <Crosshair width="42" height="42" viewBox="0 0 42 42">
                        <circle cx="21" cy="21" r="10.5" fill="#e2e2e2" stroke="#b3b3b3" strokeWidth="1.2" />
                        <path d="M21 0v42M0 21h42" stroke="#444" strokeWidth="1.8" />
                      </Crosshair>
                      to select the area of the screen to capture. To move the selection, press and<br />
                      <Tight>hold Space bar while dragging. To cancel taking the screenshot, press the Esc (Escape) key.</Tight>
                    </StepText>
                  </Step>
                </Steps>
              </Article>
            </Page>
            <ScrollTrack><ScrollThumb /></ScrollTrack>
          </Viewport>
        </BrowserWindow>

        <Dock>
          {appDock.map(([Art, running], i) => (
            <DockSlot key={i}><svg width="56" height="56" viewBox="0 0 56 56"><Art /></svg>{running && <RunningDot />}</DockSlot>
          ))}
          <Divider />
          {runningDock.map((Art, i) => (
            <DockSlot key={i}><svg width="56" height="56" viewBox="0 0 56 56"><Art /></svg><RunningDot $cool /></DockSlot>
          ))}
          <Divider />
          {minis.map((Art, i) => (
            <MiniSlot key={i}><svg width="74.7" height="76" viewBox="0 0 74.7 76"><Art /></svg></MiniSlot>
          ))}
        </Dock>
        <Defs />
      </Desktop>
    </>
  );
}
